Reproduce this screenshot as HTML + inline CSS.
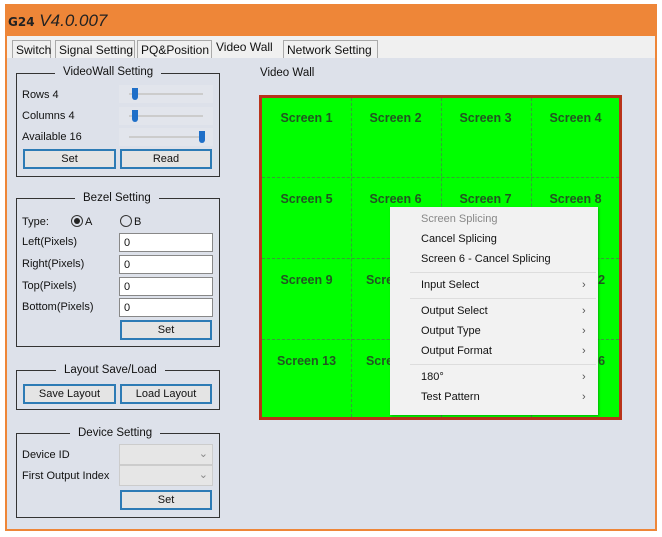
<!DOCTYPE html><html><head><style>
*{margin:0;padding:0;box-sizing:border-box}
body{width:662px;height:537px;background:#fff;position:relative;font-family:"Liberation Sans",sans-serif;font-size:11px;color:#111;overflow:hidden}
.a{position:absolute}
.win{left:5px;top:4px;width:652px;height:527px;background:#dde1ea;border:2px solid #ee8638;border-top:none}
.title{left:5px;top:4px;width:652px;height:32px;background:#ee8638}
.tabs{left:7px;top:36px;width:648px;height:22px;background:#f0f0f0}
.tab{top:40px;height:18px;border:1px solid #aaa;border-bottom:none;background:#f0f0f0;padding:2px 3px;white-space:nowrap;font-size:12px}
.grp{border:1px solid #333}
.gt{background:#dde1ea;padding:0 8px;white-space:nowrap;font-size:11.5px}
.btn{border:2px solid #2d7bb5;background:#e4e4e4;text-align:center;line-height:16px;height:20px}
.inp{background:#fff;border:1px solid #888;height:19px;padding-left:4px;line-height:18px}
.sl{height:18px;background:#e2e5ec}
.sl i{position:absolute;left:10px;right:10px;top:8px;height:2px;background:#ccc}
.sl b{position:absolute;top:3px;width:6px;height:12px;background:#1f6fc8;border-radius:0 0 3px 3px}
.scr{font-weight:bold;color:#225522;font-size:12.5px;width:89px;text-align:center}
.mi{left:421px;font-size:11px}
.ar{left:582px;color:#555}
.sep{left:410px;width:186px;height:1px;background:#ddd}
</style></head><body>
<div class="a win"></div>
<div class="a title"></div>
<div class="a" style="left:8px;top:11px;font-size:17px;color:#222"><b style="font-size:12px;font-family:'DejaVu Sans'">G24</b> <i>V4.0.007</i></div>
<div class="a tabs"></div>
<div class="a tab" style="left:12px;width:39px">Switch</div>
<div class="a tab" style="left:55px;width:80px">Signal Setting</div>
<div class="a tab" style="left:137px;width:75px">PQ&amp;Position</div>
<div class="a" style="left:216px;top:40px;font-size:12px">Video Wall</div>
<div class="a tab" style="left:283px;width:95px">Network Setting</div>

<div class="a grp" style="left:16px;top:73px;width:204px;height:104px"></div>
<div class="a gt" style="left:55px;top:66px">VideoWall Setting</div>
<div class="a" style="left:22px;top:89px">Rows 4</div>
<div class="a" style="left:22px;top:110px">Columns 4</div>
<div class="a" style="left:22px;top:131px">Available 16</div>
<div class="a sl" style="left:119px;top:85px;width:94px"><i></i><b style="left:13px"></b></div>
<div class="a sl" style="left:119px;top:107px;width:94px"><i></i><b style="left:13px"></b></div>
<div class="a sl" style="left:119px;top:128px;width:94px"><i></i><b style="left:80px"></b></div>
<div class="a btn" style="left:23px;top:149px;width:93px">Set</div>
<div class="a btn" style="left:120px;top:149px;width:92px">Read</div>

<div class="a grp" style="left:16px;top:198px;width:204px;height:149px"></div>
<div class="a gt" style="left:75px;top:192px">Bezel Setting</div>
<div class="a" style="left:22px;top:216px">Type:</div>
<div class="a" style="left:71px;top:215px;width:12px;height:12px;border:1px solid #333;border-radius:50%"><div class="a" style="left:2px;top:2px;width:6px;height:6px;background:#222;border-radius:50%"></div></div>
<div class="a" style="left:85px;top:216px">A</div>
<div class="a" style="left:120px;top:215px;width:12px;height:12px;border:1px solid #333;border-radius:50%"></div>
<div class="a" style="left:134px;top:216px">B</div>
<div class="a" style="left:22px;top:236px">Left(Pixels)</div>
<div class="a" style="left:22px;top:258px">Right(Pixels)</div>
<div class="a" style="left:22px;top:280px">Top(Pixels)</div>
<div class="a" style="left:22px;top:301px">Bottom(Pixels)</div>
<div class="a inp" style="left:119px;top:233px;width:94px">0</div>
<div class="a inp" style="left:119px;top:255px;width:94px">0</div>
<div class="a inp" style="left:119px;top:277px;width:94px">0</div>
<div class="a inp" style="left:119px;top:298px;width:94px">0</div>
<div class="a btn" style="left:120px;top:320px;width:92px">Set</div>

<div class="a grp" style="left:16px;top:370px;width:204px;height:40px"></div>
<div class="a gt" style="left:56px;top:364px">Layout Save/Load</div>
<div class="a btn" style="left:23px;top:384px;width:93px">Save Layout</div>
<div class="a btn" style="left:120px;top:384px;width:92px">Load Layout</div>

<div class="a grp" style="left:16px;top:433px;width:204px;height:85px"></div>
<div class="a gt" style="left:70px;top:427px">Device Setting</div>
<div class="a" style="left:22px;top:449px">Device ID</div>
<div class="a" style="left:22px;top:470px">First Output Index</div>
<div class="a" style="left:119px;top:444px;width:94px;height:21px;background:#e6e6e6;border:1px solid #ccc;color:#888;text-align:right;padding-right:4px;line-height:18px">⌄</div>
<div class="a" style="left:119px;top:465px;width:94px;height:21px;background:#e6e6e6;border:1px solid #ccc;color:#888;text-align:right;padding-right:4px;line-height:18px">⌄</div>
<div class="a btn" style="left:120px;top:490px;width:92px">Set</div>

<div class="a" style="left:260px;top:67px;font-size:11.5px">Video Wall</div>
<div class="a" style="left:259px;top:95px;width:363px;height:325px;background:#0f0;border:3px solid #b8331a"></div>
<div class="a" style="left:351px;top:98px;height:319px;border-left:1px dashed #3a9a3a"></div>
<div class="a" style="left:441px;top:98px;height:319px;border-left:1px dashed #3a9a3a"></div>
<div class="a" style="left:531px;top:98px;height:319px;border-left:1px dashed #3a9a3a"></div>
<div class="a" style="left:262px;top:177px;width:357px;border-top:1px dashed #3a9a3a"></div>
<div class="a" style="left:262px;top:258px;width:357px;border-top:1px dashed #3a9a3a"></div>
<div class="a" style="left:262px;top:339px;width:357px;border-top:1px dashed #3a9a3a"></div>
<div class="a scr" style="left:262px;top:111px">Screen 1</div><div class="a scr" style="left:351px;top:111px">Screen 2</div><div class="a scr" style="left:441px;top:111px">Screen 3</div><div class="a scr" style="left:531px;top:111px">Screen 4</div>
<div class="a scr" style="left:262px;top:192px">Screen 5</div><div class="a scr" style="left:351px;top:192px">Screen 6</div><div class="a scr" style="left:441px;top:192px">Screen 7</div><div class="a scr" style="left:531px;top:192px">Screen 8</div>
<div class="a scr" style="left:262px;top:273px">Screen 9</div><div class="a scr" style="left:351px;top:273px">Screen 10</div><div class="a scr" style="left:531px;top:273px">Screen 12</div>
<div class="a scr" style="left:262px;top:354px">Screen 13</div><div class="a scr" style="left:351px;top:354px">Screen 14</div><div class="a scr" style="left:531px;top:354px">Screen 16</div>

<div class="a" style="left:390px;top:207px;width:208px;height:208px;background:#f2f2f2;box-shadow:1px 1px 2px rgba(0,0,0,.3)"></div>
<div class="a mi" style="top:213px;color:#888">Screen Splicing</div>
<div class="a mi" style="top:233px">Cancel Splicing</div>
<div class="a mi" style="top:253px">Screen 6 - Cancel Splicing</div>
<div class="a sep" style="top:272px"></div>
<div class="a mi" style="top:279px">Input Select</div><div class="a ar" style="top:279px">›</div>
<div class="a sep" style="top:298px"></div>
<div class="a mi" style="top:305px">Output Select</div><div class="a ar" style="top:305px">›</div>
<div class="a mi" style="top:325px">Output Type</div><div class="a ar" style="top:325px">›</div>
<div class="a mi" style="top:345px">Output Format</div><div class="a ar" style="top:345px">›</div>
<div class="a sep" style="top:364px"></div>
<div class="a mi" style="top:371px">180°</div><div class="a ar" style="top:371px">›</div>
<div class="a mi" style="top:391px">Test Pattern</div><div class="a ar" style="top:391px">›</div>
</body></html>
